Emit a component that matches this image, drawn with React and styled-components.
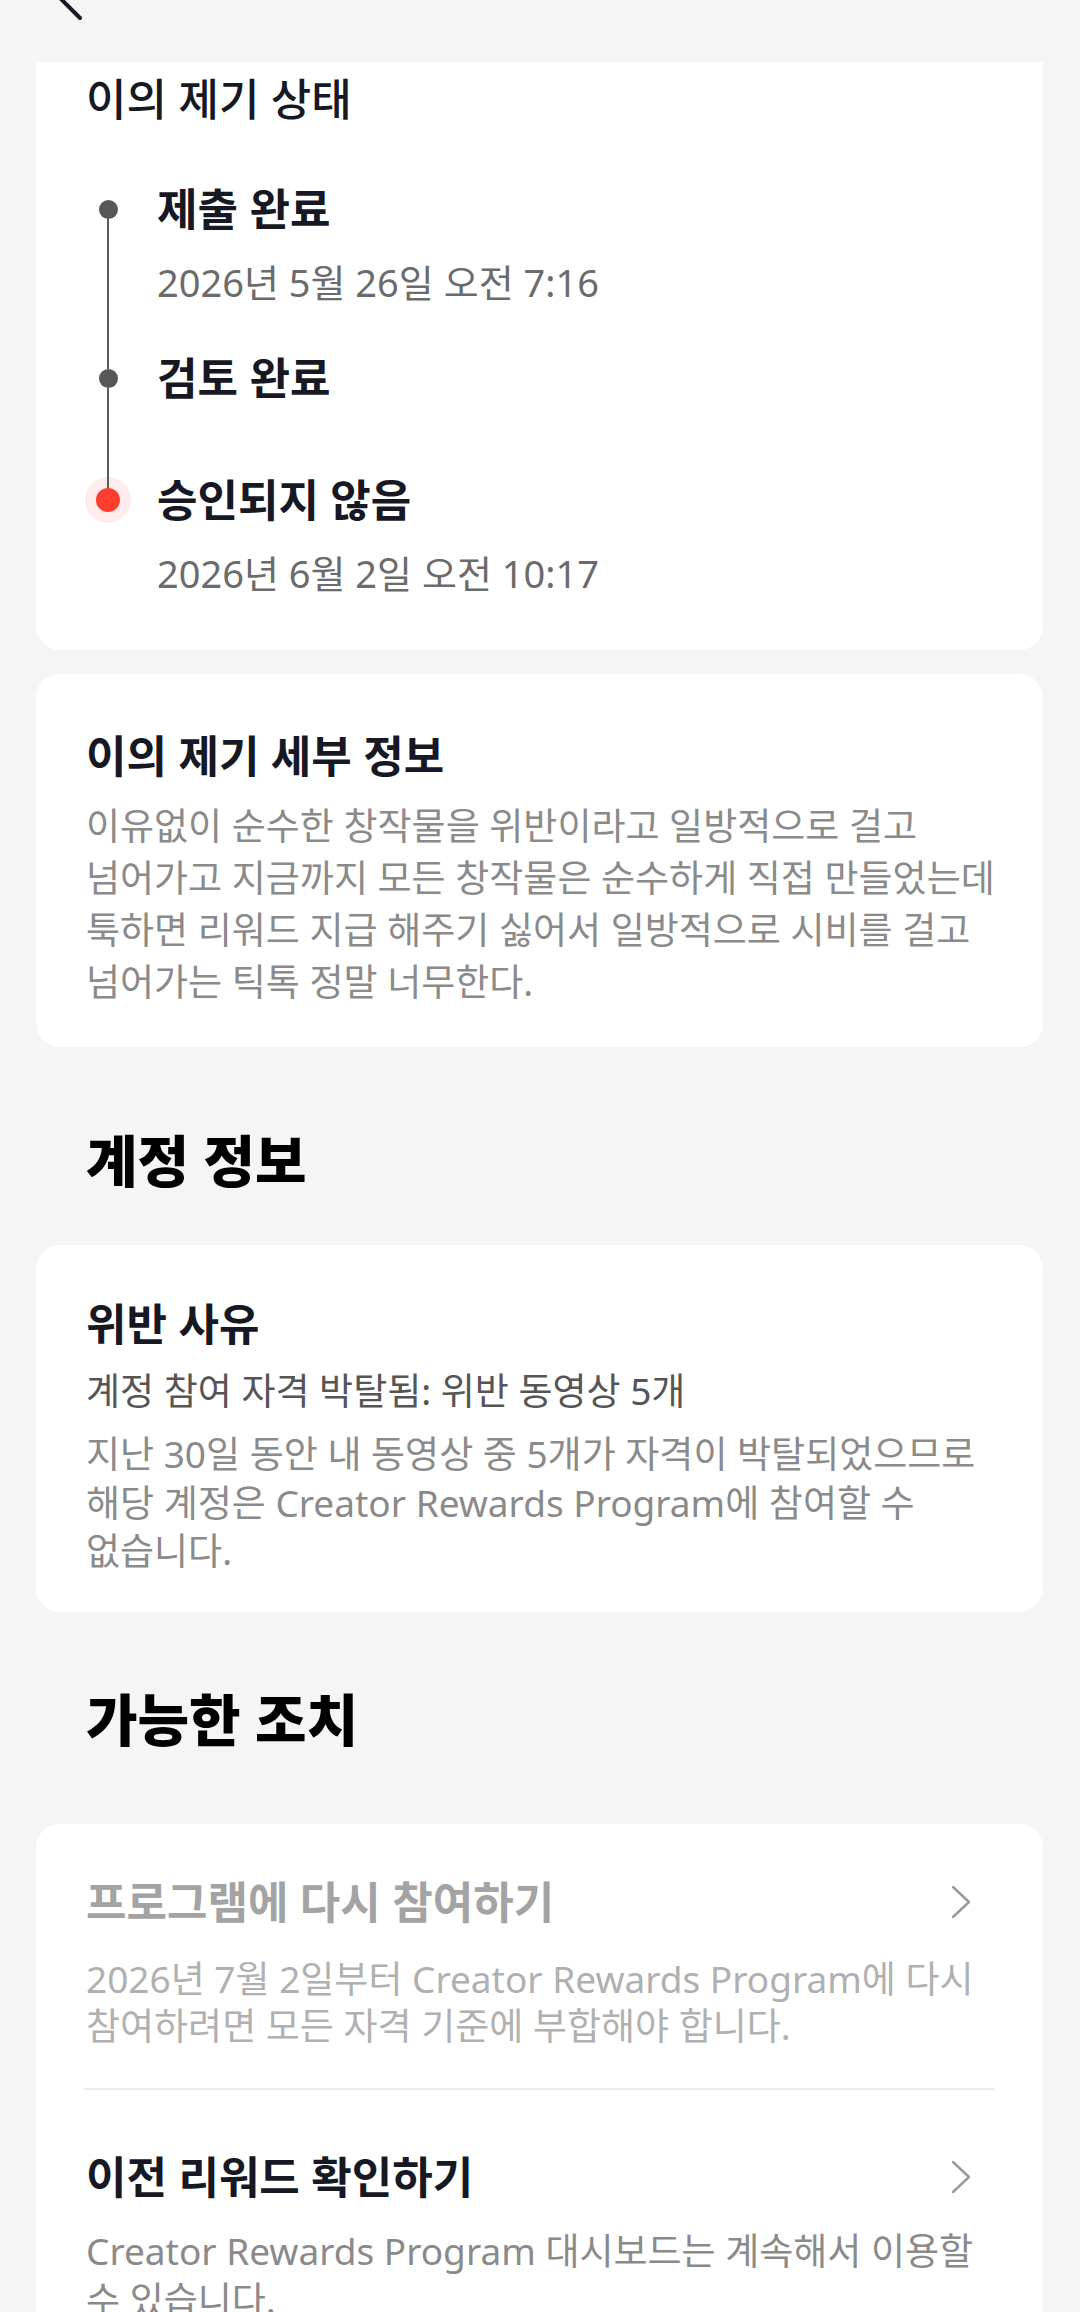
import React from "react";
import styled, { createGlobalStyle } from "styled-components";

const GlobalStyle = createGlobalStyle`
  html, body {
    margin: 0;
    padding: 0;
    background: #f5f5f5;
  }
  body {
    font-family: "Noto Sans", "Noto Sans CJK KR", Roboto, sans-serif;
    color: #161823;
    -webkit-font-smoothing: antialiased;
  }
  * { box-sizing: border-box; }
`;

const Screen = styled.div`
  width: 1080px;
  min-height: 2312px;
  background: #f5f5f5;
  overflow: hidden;
`;

const Header = styled.header`
  height: 62px;
  padding-left: 50px;
  display: flex;
  align-items: flex-start;
`;

const Content = styled.main`
  padding: 0 37px 0 36px;
  display: flex;
  flex-direction: column;
`;

const Card = styled.section`
  background: #ffffff;
  border-radius: ${(p) => (p.$flatTop ? "0 0 24px 24px" : "24px")};
  padding: ${(p) => p.$pad || "52px 50px 40px 50px"};
  margin-top: ${(p) => p.$mt || "0px"};
  display: flex;
  flex-direction: column;
`;

const CardHeading = styled.h3`
  margin: 0;
  font-size: 44px;
  line-height: 52px;
  font-weight: ${(p) => p.$weight || 700};
  color: #161823;
  white-space: nowrap;
`;

const SectionTitle = styled.h2`
  margin: ${(p) => p.$margin};
  font-size: 56px;
  line-height: 68px;
  font-weight: 900;
  color: #000000;
  padding-left: 50px;
`;

const Timeline = styled.ol`
  list-style: none;
  margin: 58px 0 0 0;
  padding: 0;
`;

const Step = styled.li`
  display: grid;
  grid-template-columns: 44px 1fr;
  column-gap: 27px;
`;

const Marker = styled.div`
  display: flex;
  flex-direction: column;
  align-items: center;
`;

const Rail = styled.span`
  position: relative;
  z-index: 1;
  width: 2px;
  background: ${(p) => (p.$hidden ? "transparent" : "#5c5c5c")};
  height: ${(p) => (p.$grow ? "auto" : p.$h)};
  flex: ${(p) => (p.$grow ? "1 1 auto" : "0 0 auto")};
`;

const Dot = styled.span`
  flex: 0 0 auto;
  width: ${(p) => (p.$alert ? "24px" : "19px")};
  height: ${(p) => (p.$alert ? "24px" : "19px")};
  border-radius: 50%;
  background: ${(p) => (p.$alert ? "#fe3f2f" : "#575757")};
  box-shadow: ${(p) => (p.$alert ? "0 0 0 11px #fdeceb" : "none")};
`;

const StepBody = styled.div`
  padding-bottom: ${(p) => p.$pb};
  display: flex;
  flex-direction: column;
`;

const StepTitle = styled.div`
  font-size: 44px;
  line-height: 52px;
  font-weight: 700;
  color: #161823;
  white-space: nowrap;
`;

const StepDate = styled.div`
  margin-top: 23px;
  font-size: 38px;
  line-height: 48px;
  color: #6b6b6b;
  white-space: nowrap;
`;

const Paragraph = styled.p`
  margin: ${(p) => p.$margin || "0"};
  font-size: 37px;
  line-height: ${(p) => p.$lh || "50px"};
  color: ${(p) => p.$color || "#8a8a8a"};
  white-space: nowrap;
`;

const ActionRow = styled.div`
  padding: ${(p) => p.$pad};
  display: flex;
  flex-direction: column;
`;

const ActionHead = styled.div`
  display: flex;
  align-items: center;
  justify-content: space-between;
`;

const ActionTitle = styled.div`
  font-size: 44px;
  line-height: 52px;
  font-weight: 700;
  color: ${(p) => (p.$disabled ? "#a3a3a3" : "#161823")};
  white-space: nowrap;
`;

const Chevron = styled.svg`
  width: 20px;
  height: 34px;
  margin-right: 24px;
  flex: 0 0 auto;
`;

const Divider = styled.hr`
  margin: 0;
  border: 0;
  height: 2px;
  background: #ececec;
`;

const ChevronRight = () => (
  <Chevron viewBox="0 0 20 34" fill="none">
    <path
      d="M2 2 L18 17 L2 32"
      stroke="#9a9a9a"
      strokeWidth="2.4"
      strokeLinecap="round"
      strokeLinejoin="round"
    />
  </Chevron>
);

const BackIcon = () => (
  <svg width="40" height="62" viewBox="0 0 40 62" fill="none" overflow="hidden">
    <path
      d="M30 -26 L8 -4 L30 18"
      stroke="#161823"
      strokeWidth="4"
      strokeLinecap="round"
      strokeLinejoin="round"
    />
  </svg>
);

const steps = [
  { title: "제출 완료", date: "2026년 5월 26일 오전 7:16", pb: "46px" },
  { title: "검토 완료", date: null, pb: "70px" },
  { title: "승인되지 않음", date: "2026년 6월 2일 오전 10:17", pb: "0px", alert: true },
];

export default function App() {
  return (
    <Screen>
      <GlobalStyle />
      <Header>
        <BackIcon />
      </Header>
      <Content>
        <Card $flatTop $pad="11px 50px 53px 50px">
          <CardHeading $weight={500}>이의 제기 상태</CardHeading>
          <Timeline>
            {steps.map((s, i) => {
              const first = i === 0;
              const last = i === steps.length - 1;
              return (
                <Step key={s.title}>
                  <Marker>
                    <Rail $hidden={first} $h={s.alert ? "14px" : "16.5px"} />
                    <Dot $alert={s.alert} />
                    <Rail $hidden={last} $grow />
                  </Marker>
                  <StepBody $pb={s.pb}>
                    <StepTitle>{s.title}</StepTitle>
                    {s.date && <StepDate>{s.date}</StepDate>}
                  </StepBody>
                </Step>
              );
            })}
          </Timeline>
        </Card>

        <Card $mt="24px" $pad="56px 50px 39px 50px">
          <CardHeading>이의 제기 세부 정보</CardHeading>
          <Paragraph $margin="18px 0 0 0" $lh="52px">
            이유없이 순수한 창작물을 위반이라고 일방적으로 걸고
            <br />
            넘어가고 지금까지 모든 창작물은 순수하게 직접 만들었는데
            <br />
            툭하면 리워드 지급 해주기 싫어서 일방적으로 시비를 걸고
            <br />
            넘어가는 틱톡 정말 너무한다.
          </Paragraph>
        </Card>

        <SectionTitle $margin="79px 0 51px 0">계정 정보</SectionTitle>

        <Card $pad="53px 50px 36px 50px">
          <CardHeading>위반 사유</CardHeading>
          <Paragraph $margin="17px 0 0 0" $lh="48px" $color="#555555">
            계정 참여 자격 박탈됨: 위반 동영상 5개
          </Paragraph>
          <Paragraph $margin="15px 0 0 0" $lh="48.5px">
            지난 30일 동안 내 동영상 중 5개가 자격이 박탈되었으므로
            <br />
            해당 계정은 Creator Rewards Program에 참여할 수
            <br />
            없습니다.
          </Paragraph>
        </Card>

        <SectionTitle $margin="73px 0 71px 0">가능한 조치</SectionTitle>

        <Card $pad="0 48px 60px 48px">
          <ActionRow $pad="52px 0 39px 2px">
            <ActionHead>
              <ActionTitle $disabled>프로그램에 다시 참여하기</ActionTitle>
              <ChevronRight />
            </ActionHead>
            <Paragraph $margin="27px 0 0 0" $lh="47px" $color="#b0b0b0">
              2026년 7월 2일부터 Creator Rewards Program에 다시
              <br />
              참여하려면 모든 자격 기준에 부합해야 합니다.
            </Paragraph>
          </ActionRow>
          <Divider />
          <ActionRow $pad="61px 0 40px 2px">
            <ActionHead>
              <ActionTitle>이전 리워드 확인하기</ActionTitle>
              <ChevronRight />
            </ActionHead>
            <Paragraph $margin="23px 0 0 0" $lh="49px">
              Creator Rewards Program 대시보드는 계속해서 이용할
              <br />
              수 있습니다.
            </Paragraph>
          </ActionRow>
        </Card>
      </Content>
    </Screen>
  );
}
